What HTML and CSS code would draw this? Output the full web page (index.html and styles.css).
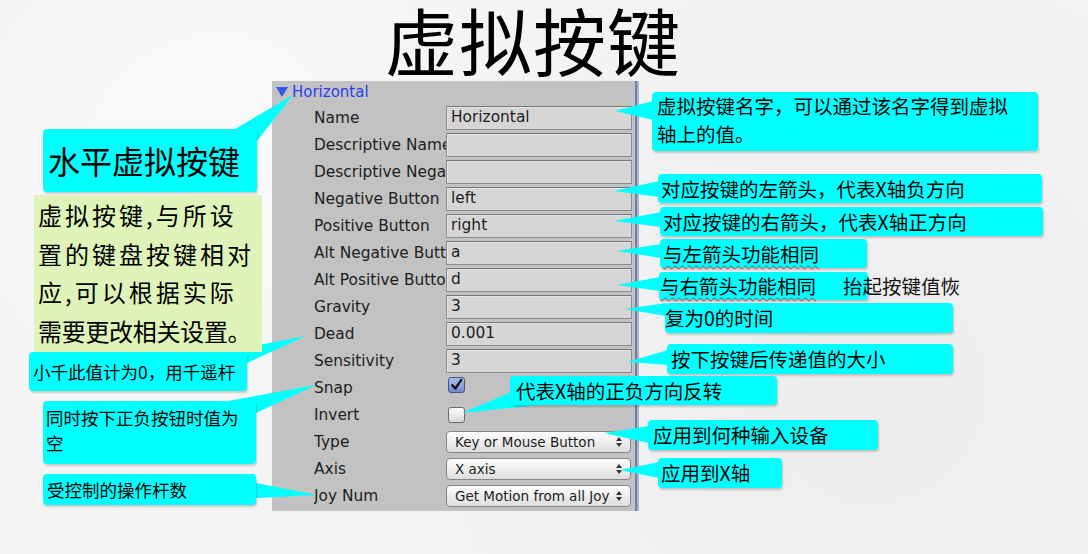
FILE: index.html
```html
<!DOCTYPE html>
<html lang="zh-CN">
<head>
<meta charset="utf-8">
<title>虚拟按键</title>
<link rel="stylesheet" href="styles.css">
</head>
<body>
<div class="slide">
  <h1 class="title">虚拟按键</h1>

  <div class="inspector">
    <div class="insp-head"><span class="tri"></span>Horizontal</div>
    <div class="row"><span class="lbl">Name</span><span class="field">Horizontal</span></div>
    <div class="row"><span class="lbl">Descriptive Name</span><span class="field"></span></div>
    <div class="row"><span class="lbl">Descriptive Negative Name</span><span class="field"></span></div>
    <div class="row"><span class="lbl">Negative Button</span><span class="field">left</span></div>
    <div class="row"><span class="lbl">Positive Button</span><span class="field">right</span></div>
    <div class="row"><span class="lbl">Alt Negative Button</span><span class="field">a</span></div>
    <div class="row"><span class="lbl">Alt Positive Button</span><span class="field">d</span></div>
    <div class="row"><span class="lbl">Gravity</span><span class="field">3</span></div>
    <div class="row"><span class="lbl">Dead</span><span class="field">0.001</span></div>
    <div class="row"><span class="lbl">Sensitivity</span><span class="field">3</span></div>
    <div class="row"><span class="lbl">Snap</span><span class="check on"><svg viewBox="0 0 16 16" width="16" height="16"><path d="M3.5 8.2 L6.8 11.8 L13 2.5" fill="none" stroke="#111" stroke-width="2.4" stroke-linecap="round" stroke-linejoin="round"/></svg></span></div>
    <div class="row"><span class="lbl">Invert</span><span class="check"></span></div>
    <div class="row"><span class="lbl">Type</span><span class="popup"><span class="ptext">Key or Mouse Button</span><svg class="ud" viewBox="0 0 8 12" width="8" height="12"><path d="M4 1 L7 5 L1 5 Z M4 11 L7 7 L1 7 Z" fill="#333"/></svg></span></div>
    <div class="row"><span class="lbl">Axis</span><span class="popup"><span class="ptext">X axis</span><svg class="ud" viewBox="0 0 8 12" width="8" height="12"><path d="M4 1 L7 5 L1 5 Z M4 11 L7 7 L1 7 Z" fill="#333"/></svg></span></div>
    <div class="row"><span class="lbl">Joy Num</span><span class="popup"><span class="ptext">Get Motion from all Joy</span><svg class="ud" viewBox="0 0 8 12" width="8" height="12"><path d="M4 1 L7 5 L1 5 Z M4 11 L7 7 L1 7 Z" fill="#333"/></svg></span></div>
  </div>

  <svg class="tails" viewBox="0 0 1088 554" width="1088" height="554">
    <g fill="#00ffff">
      <polygon points="235,129 257,141 293,95"/>
      <polygon points="222,352 247,363 306,336"/>
      <polygon points="228,401 256,413 316,385"/>
      <polygon points="256,483 256,498 317,495"/>
      <polygon points="653,101 653,120 615,111"/>
      <polygon points="659,181 659,197 614,191"/>
      <polygon points="661,212 661,227 614,221"/>
      <polygon points="661,244 661,258 617,251"/>
      <polygon points="660,277 660,291 617,285"/>
      <polygon points="666,303 666,316 625,309"/>
      <polygon points="668,350 668,365 627,362"/>
      <polygon points="511,392 540,405 462,413"/>
      <polygon points="649,426 649,443 604,433"/>
      <polygon points="659,462 659,478 620,470"/>
    </g>
  </svg>

  <div class="note n-head">水平虚拟按键</div>
  <div class="memo">
    <span class="jl">虚拟按键,与所设</span>
    <span class="jl">置的键盘按键相对</span>
    <span class="jl">应,可以根据实际</span>
    <span class="ll">需要更改相关设置。</span>
  </div>
  <div class="note n-dead">小千此值计为0，用千遥杆</div>
  <div class="note n-snap">同时按下正负按钮时值为<br>空</div>
  <div class="note n-joy">受控制的操作杆数</div>

  <div class="note r r1">虚拟按键名字，可以通过该名字得到虚拟<br>轴上的值。</div>
  <div class="note r r2">对应按键的左箭头，代表X轴负方向</div>
  <div class="note r r3">对应按键的右箭头，代表X轴正方向</div>
  <div class="note r r4"><span class="spell">与左箭头功能相同</span></div>
  <div class="note r r5"><span class="spell">与右箭头功能相同</span></div>
  <div class="loose">抬起按键值恢</div>
  <div class="note r r6">复为0的时间</div>
  <div class="note r r7">按下按键后传递值的大小</div>
  <div class="note r r8">代表X轴的正负方向反转</div>
  <div class="note r r9">应用到何种输入设备</div>
  <div class="note r r10">应用到X轴</div>
</div>
</body>
</html>
```

FILE: styles.css
```css
html, body {
  margin: 0;
  padding: 0;
}
body {
  width: 1088px;
  height: 554px;
  overflow: hidden;
  background: #f3f3f3;
}
.slide {
  position: relative;
  width: 1088px;
  height: 554px;
  background-color: #f3f3f3;
  background-image:
    radial-gradient(circle at 20% 30%, rgba(255,255,255,0.6), rgba(255,255,255,0) 40%),
    radial-gradient(circle at 80% 70%, rgba(230,230,230,0.5), rgba(230,230,230,0) 45%);
  font-family: "Noto Sans CJK SC", "Noto Sans", sans-serif;
  color: #000;
}
.title {
  margin: 0;
  height: 81px;
  padding-left: 385px;
  font-family: "Noto Sans CJK SC", sans-serif;
  font-weight: 400;
  font-size: 73px;
  line-height: 77px;
  letter-spacing: 1px;
  color: #000;
  white-space: nowrap;
}

/* Inspector panel */
.inspector {
  margin-left: 272px;
  width: 365px;
  height: 430px;
  padding-bottom: 2px;
  box-sizing: border-box;
  background: #c2c2c2;
  border-right: 2px solid #6f7fa6;
  box-shadow: 2px 0 0 #aab4cc;
  font-family: "DejaVu Sans", "Liberation Sans", sans-serif;
  font-size: 15.4px;
  color: #1c1c1c;
}
.insp-head {
  height: 23px;
  display: flex;
  align-items: center;
  padding-left: 4px;
  color: #2a3cf0;
  font-size: 15px;
  line-height: 18px;
  padding-bottom: 2px;
  box-sizing: border-box;
}
.tri {
  width: 0;
  height: 0;
  border-left: 6px solid transparent;
  border-right: 6px solid transparent;
  border-top: 10px solid #3a55e8;
  margin-right: 4px;
}
.row {
  height: 27px;
  display: flex;
  align-items: center;
}
.lbl {
  width: 132px;
  margin-left: 42px;
  overflow: hidden;
  white-space: nowrap;
  flex: none;
}
.field {
  width: 186px;
  height: 24px;
  box-sizing: border-box;
  border: 1px solid #8a8a8a;
  border-top-color: #777;
  background: #d6d6d6;
  box-shadow: inset 1px 1px 0 #e4e4e4;
  padding-left: 4px;
  line-height: 21px;
  white-space: nowrap;
  flex: none;
}
.check {
  width: 17px;
  height: 16px;
  margin-left: 2px;
  box-sizing: border-box;
  border: 1px solid #6a6a6a;
  border-radius: 3px;
  background: linear-gradient(#fbfbfb, #d9d9d9);
  display: flex;
  align-items: center;
  justify-content: center;
}
.check.on {
  background: linear-gradient(#aabfeb, #6e8bd0);
  border-color: #46567c;
  margin-top: -5px;
}
.check svg {
  display: block;
}
.popup {
  width: 185px;
  height: 22px;
  box-sizing: border-box;
  border: 1px solid #868686;
  border-radius: 4px;
  background: linear-gradient(#fdfdfd, #dedede);
  display: flex;
  align-items: center;
  padding-left: 8px;
  padding-right: 7px;
  font-size: 13.5px;
  white-space: nowrap;
  flex: none;
}
.ptext {
  flex: 1;
  overflow: hidden;
}
.ud {
  flex: none;
  display: block;
}

/* Callout tails */
.tails {
  position: absolute;
  left: 0;
  top: 0;
}

/* Callouts */
.note {
  position: absolute;
  background: #00ffff;
  border-radius: 4px;
  box-shadow: 1px 2px 2px rgba(0, 0, 0, 0.18);
  box-sizing: border-box;
  color: #000;
  white-space: nowrap;
}
.n-head {
  left: 43px;
  top: 129px;
  width: 214px;
  height: 63px;
  font-size: 32px;
  line-height: 63px;
  padding-left: 5px;
}
.memo {
  position: absolute;
  left: 34px;
  top: 195px;
  width: 228px;
  height: 157px;
  box-sizing: border-box;
  background: #dff4b9;
  padding: 1px 0 0 4px;
  font-size: 24px;
  line-height: 38.7px;
  white-space: nowrap;
}
.memo .jl {
  display: block;
  letter-spacing: 3px;
}
.memo .ll {
  display: block;
  letter-spacing: -0.3px;
}
.n-dead {
  left: 29px;
  top: 352px;
  width: 218px;
  height: 39px;
  font-size: 17.5px;
  line-height: 39px;
  padding-left: 4px;
}
.n-snap {
  left: 43px;
  top: 401px;
  width: 213px;
  height: 63px;
  font-size: 17.5px;
  line-height: 25px;
  padding: 4px 0 0 3px;
}
.n-joy {
  left: 43px;
  top: 474px;
  width: 213px;
  height: 31px;
  font-size: 17.5px;
  line-height: 31px;
  padding-left: 4px;
}
.r {
  font-size: 19.5px;
  line-height: 29px;
}
.r1 {
  left: 652px;
  top: 92px;
  width: 386px;
  height: 59px;
  padding: 0 0 0 5px;
  line-height: 28px;
}
.r2 { left: 658px; top: 174px; width: 384px; height: 29px; padding-left: 3px; }
.r3 { left: 660px; top: 207px; width: 383px; height: 29px; padding-left: 3px; }
.r4 { left: 660px; top: 239px; width: 207px; height: 29px; padding-left: 3px; }
.r5 { left: 659px; top: 272px; width: 209px; height: 28px; padding-left: 1px; line-height: 27px; }
.r6 { left: 665px; top: 303px; width: 288px; height: 30px; padding-left: 0; line-height: 29px; }
.r7 { left: 667px; top: 344px; width: 286px; height: 30px; padding-left: 4px; }
.r8 { left: 510px; top: 376px; width: 267px; height: 29px; padding-left: 6px; }
.r9 { left: 648px; top: 420px; width: 230px; height: 30px; padding-left: 5px; }
.r10 { left: 658px; top: 458px; width: 124px; height: 30px; padding-left: 3px; }
.spell {
  text-decoration: underline wavy #e02828;
  text-decoration-thickness: 1px;
  text-underline-offset: 3px;
}
.loose {
  position: absolute;
  left: 843px;
  top: 271px;
  font-size: 19.5px;
  line-height: 29px;
  white-space: nowrap;
  color: #111;
}
```
